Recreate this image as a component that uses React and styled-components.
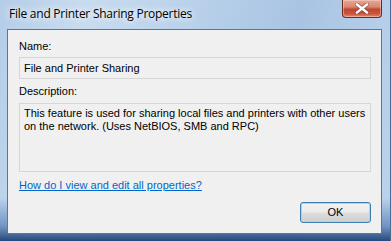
import React from "react";
import styled, { createGlobalStyle } from "styled-components";

const Global = createGlobalStyle`
  html, body { margin: 0; padding: 0; }
  body { width: 391px; height: 241px; overflow: hidden; }
`;

function CloseGlyph() {
  return (
    <svg width="14" height="11" viewBox="0 0 14 11">
      <path
        d="M2 1.5 L12 9.5 M12 1.5 L2 9.5"
        stroke="#5a2a22"
        strokeWidth="4"
        strokeLinecap="square"
        opacity="0.55"
      />
      <path
        d="M2 1.5 L12 9.5 M12 1.5 L2 9.5"
        stroke="#ffffff"
        strokeWidth="2.4"
        strokeLinecap="square"
      />
    </svg>
  );
}

export default function App() {
  return (
    <>
      <Global />
      <Window>
        <TitleBar>
          <Title>File and Printer Sharing Properties</Title>
          <CloseButton>
            <CloseGlyph />
          </CloseButton>
        </TitleBar>
        <Client>
          <Label>Name:</Label>
          <Field>File and Printer Sharing</Field>
          <Label $top={6}>Description:</Label>
          <TextArea>
            This feature is used for sharing local files and printers with other users
            <br />
            on the network. (Uses NetBIOS, SMB and RPC)
          </TextArea>
          <HelpLink href="#">How do I view and edit all properties?</HelpLink>
          <Footer>
            <Button>OK</Button>
          </Footer>
        </Client>
      </Window>
    </>
  );
}

const Window = styled.div`
  width: 391px;
  height: 241px;
  box-sizing: border-box;
  display: flex;
  flex-direction: column;
  padding: 0 8px 7px 7px;
  background:
    linear-gradient(180deg, rgba(255,255,255,0) 82%, rgba(46,94,160,0.55) 94%, #27487a 100%),
    linear-gradient(100deg, #b4cde8 0%, #c8dcef 20%, #b9d1ea 45%, #a9c4e3 70%, #bcd3ec 100%);
  border-right: 1px solid #4d6a92;
`;

const TitleBar = styled.div`
  height: 29px;
  display: flex;
  align-items: flex-start;
  justify-content: space-between;
`;

const Title = styled.div`
  font-family: "Open Sans", "Noto Sans", sans-serif;
  font-size: 12px;
  letter-spacing: -0.25px;
  color: #000;
  margin: 7px 0 0 2px;
  line-height: 14px;
  text-shadow: 0 0 6px #ffffff, 0 0 10px #ffffff;
`;

const CloseButton = styled.div`
  width: 40px;
  height: 18px;
  box-sizing: border-box;
  border: 1px solid #6e2a20;
  border-top: none;
  border-radius: 0 0 4px 4px;
  background: linear-gradient(180deg, #e9a694 0%, #d98873 40%, #c2462f 55%, #c9553b 80%, #dc8a6f 100%);
  box-shadow: inset 0 0 0 1px rgba(255,220,210,0.45);
  display: flex;
  align-items: center;
  justify-content: center;
`;

const Client = styled.div`
  flex: 1;
  box-sizing: border-box;
  background: #f0f0f0;
  border: 1px solid #5f7590;
  padding: 10px 10px 0 11px;
  display: flex;
  flex-direction: column;
  font-family: "Liberation Sans", Arial, sans-serif;
  font-size: 11px;
  color: #000;
`;

const Label = styled.div`
  line-height: 13px;
  margin-top: ${(p) => p.$top || 0}px;
`;

const Field = styled.div`
  margin-top: 4px;
  height: 22px;
  box-sizing: border-box;
  border: 1px solid #d6d6d6;
  padding: 0 4px;
  line-height: 20px;
  background: #f0f0f0;
`;

const TextArea = styled.div`
  margin-top: 5px;
  height: 69px;
  box-sizing: border-box;
  border: 1px solid #d6d6d6;
  padding: 3px 4px;
  line-height: 13px;
  white-space: nowrap;
  background: #f0f0f0;
`;

const HelpLink = styled.a`
  margin-top: 7px;
  line-height: 13px;
  color: #0066cc;
  text-decoration: underline;
  align-self: flex-start;
`;

const Footer = styled.div`
  display: flex;
  justify-content: flex-end;
  margin-top: 10px;
`;

const Button = styled.div`
  width: 71px;
  height: 21px;
  box-sizing: border-box;
  border: 1px solid #3c7fb1;
  border-radius: 3px;
  background: linear-gradient(180deg, #f2f2f2 0%, #ebebeb 48%, #dddddd 52%, #cfcfcf 100%);
  box-shadow: inset 0 0 0 1px #a6d7ee;
  display: flex;
  align-items: center;
  justify-content: center;
  line-height: 13px;
`;
